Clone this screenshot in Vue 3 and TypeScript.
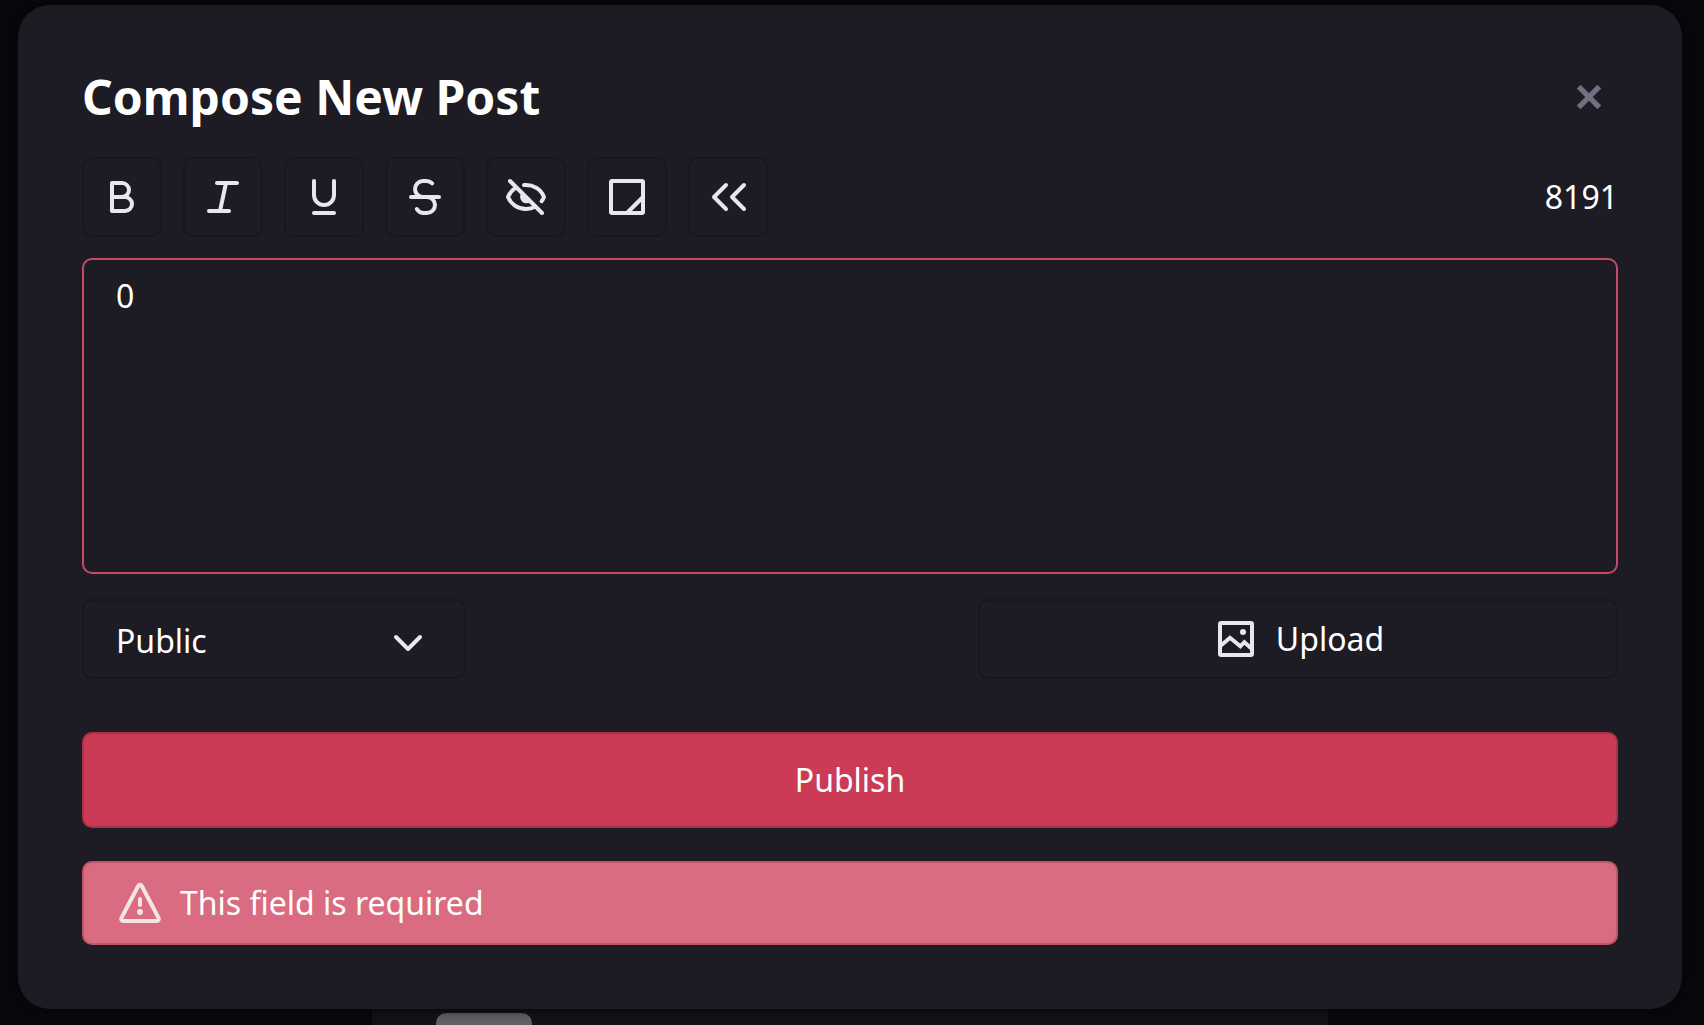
<script setup lang="ts">
import { computed, ref } from 'vue'

interface Tool {
  name: string
  paths: string[]
  pupil?: boolean
}

const LIMIT = 8192

const tools: Tool[] = [
  { name: 'Bold', paths: ['M7 5h5a3.5 3.5 0 0 1 0 7H7z', 'M7 12h6.5a3.5 3.5 0 0 1 0 7H7z'] },
  { name: 'Italic', paths: ['M9 5h10', 'M5 19h10', 'M13.5 5l-3 14'] },
  { name: 'Underline', paths: ['M7 4v7a5 5 0 0 0 10 0V4', 'M7 20h10'] },
  {
    name: 'Strikethrough',
    paths: ['M5 12h14', 'M15.6 5.2C14.8 4.4 13.8 4 12.6 4H11a4 4 0 0 0 0 8h2a4 4 0 0 1 0 8h-1.6c-1.5 0-2.7-.7-3.5-2'],
  },
  {
    name: 'Spoiler',
    pupil: true,
    paths: [
      'M4 4l16 16',
      'M6.6 7.6C4.8 8.8 3.6 10.4 3 12c1.4 3.5 4.8 6 9 6 1.7 0 3.3-.4 4.600-1.100',
      'M11 6.050C15.400 5.600 19.500 8 21 12c-.3.800-.7 1.500-1.200 2.100',
    ],
  },
  { name: 'Note', paths: ['M4.600 4h14.800a.6.6 0 0 1 .6.6v14.800a.6.6 0 0 1-.6.6H4.600a.6.6 0 0 1-.6-.6V4.600a.6.6 0 0 1 .6-.6z', 'M20 12l-8 8'] },
  { name: 'Quote', paths: ['M11 6l-6 6 6 6', 'M20 6l-6 6 6 6'] },
]

const body = ref('0')
const visibility = ref('Public')
const remaining = computed(() => LIMIT - body.value.length)
</script>

<template>
  <div class="page">
    <div class="feed" aria-hidden="true"><div class="thumb"></div></div>
    <form class="dialog" role="dialog" aria-labelledby="dialog-title" @submit.prevent>
      <header class="head">
        <h1 id="dialog-title">Compose New Post</h1>
        <button class="close" type="button" aria-label="Close">
          <svg viewBox="0 0 24 24"><path d="M2.500 2.500l19 19M21.500 2.500l-19 19" /></svg>
        </button>
      </header>

      <div class="toolbar">
        <button v-for="tool in tools" :key="tool.name" class="tool" type="button" :aria-label="tool.name">
          <svg class="icon" viewBox="0 0 24 24">
            <path v-for="d in tool.paths" :key="d" :d="d" />
            <path v-if="tool.pupil" class="solid" d="M10 9.500l4.700 4.700A3 3 0 1 1 10 9.500z" />
          </svg>
        </button>
        <output class="count" for="post-body">{{ remaining }}</output>
      </div>

      <textarea id="post-body" v-model="body" aria-label="Post text" aria-invalid="true"></textarea>

      <div class="options">
        <div class="picker">
          <select v-model="visibility" aria-label="Visibility">
            <option>Public</option>
            <option>Unlisted</option>
            <option>Followers</option>
          </select>
          <svg class="icon arrow" viewBox="0 0 24 24"><path d="M6 9l6 6 6-6" /></svg>
        </div>
        <button class="upload" type="button">
          <svg class="icon" viewBox="0 0 24 24">
            <rect x="4" y="4" width="16" height="16" rx="0.6" />
            <path class="miter" d="M4 15.600L9 11.400l5.200 4.200 2-2L20 17" />
            <circle class="solid" cx="15.500" cy="8.500" r="1.500" />
          </svg>
          <span>Upload</span>
        </button>
      </div>

      <button class="publish" type="submit">Publish</button>

      <div class="error" role="alert">
        <svg class="icon" viewBox="0 0 24 24">
          <path d="M11.100 3.500L2.700 19.500a1 1 0 0 0 .9 1.500h16.800a1 1 0 0 0 .9-1.500L12.900 3.500a1 1 0 0 0-1.800 0z" />
          <path d="M12 10v3" />
          <circle class="solid" cx="12" cy="16.500" r="1.500" />
        </svg>
        <span>This field is required</span>
      </div>
    </form>
  </div>
</template>

<style>
body {
  margin: 0;
  background: #07070b;
}
</style>

<style scoped>
.page {
  position: relative;
  box-sizing: border-box;
  min-height: 100vh;
  padding: 5px 22px 16px 18px;
  overflow: hidden;
  background: #08080c;
  color: #fff;
  font: 32px/48px 'Noto Sans', sans-serif;
}

.feed {
  position: absolute;
  bottom: 0;
  left: 50%;
  box-sizing: border-box;
  width: 956px;
  height: 32px;
  margin-left: -480px;
  padding: 20px 64px 0;
  background: #121217;
}

.thumb {
  width: 96px;
  height: 12px;
  border-radius: 10px 10px 0 0;
  background: #626166;
}

.dialog {
  position: relative;
  display: flex;
  flex-direction: column;
  box-sizing: border-box;
  padding: 60px 64px 64px;
  border-radius: 32px;
  background: #1d1b23;
  box-shadow: 0 0 12px #050508;
}

.head {
  display: flex;
  align-items: center;
  justify-content: space-between;
  height: 64px;
  margin-bottom: 28px;
}

h1 {
  margin: 0;
  font-size: 48px;
  line-height: 64px;
  font-weight: 700;
}

button,
select,
textarea {
  box-sizing: border-box;
  margin: 0;
  padding: 0;
  border: 2px solid #18161e;
  border-radius: 10px;
  outline: none;
  background: none;
  color: inherit;
  font: inherit;
}

.close {
  display: flex;
  padding: 16px;
  border: 0;
}

.close svg {
  width: 26px;
  height: 26px;
  fill: none;
  stroke: #727080;
  stroke-width: 5;
}

.icon {
  flex: none;
  width: 48px;
  height: 48px;
  fill: none;
  stroke: #e9e7ee;
  stroke-width: 2;
  stroke-linecap: round;
  stroke-linejoin: round;
}

.icon .solid {
  fill: #e9e7ee;
  stroke: none;
}

.icon .miter {
  stroke-linejoin: miter;
}

.toolbar {
  display: flex;
  align-items: center;
  gap: 21px;
  margin-bottom: 21px;
}

.tool {
  display: flex;
  align-items: center;
  justify-content: center;
  width: 80px;
  height: 80px;
}

.count {
  margin-left: auto;
}

textarea {
  display: block;
  width: 100%;
  height: 316px;
  padding: 12px 32px;
  border-color: #c84a6a;
  resize: none;
}

.options {
  display: flex;
  justify-content: space-between;
  margin: 25px 0 53px;
}

.picker {
  position: relative;
  width: 25%;
}

.picker select {
  width: 100%;
  height: 80px;
  padding: 4px 80px 0 32px;
  appearance: none;
}

.arrow {
  position: absolute;
  top: 20px;
  right: 34px;
  pointer-events: none;
}

.upload {
  display: flex;
  align-items: center;
  justify-content: center;
  gap: 16px;
  width: 640px;
  height: 80px;
}

.publish {
  height: 96px;
  border-color: #a93249;
  background: #cc3b56;
}

.error {
  display: flex;
  align-items: center;
  gap: 16px;
  box-sizing: border-box;
  height: 84px;
  margin-top: 33px;
  padding: 0 32px;
  border: 2px solid #c0546b;
  border-radius: 10px;
  background: #d96c80;
}

.error .icon {
  stroke: #f3e4e7;
}

.error .solid {
  fill: #f3e4e7;
}
</style>
